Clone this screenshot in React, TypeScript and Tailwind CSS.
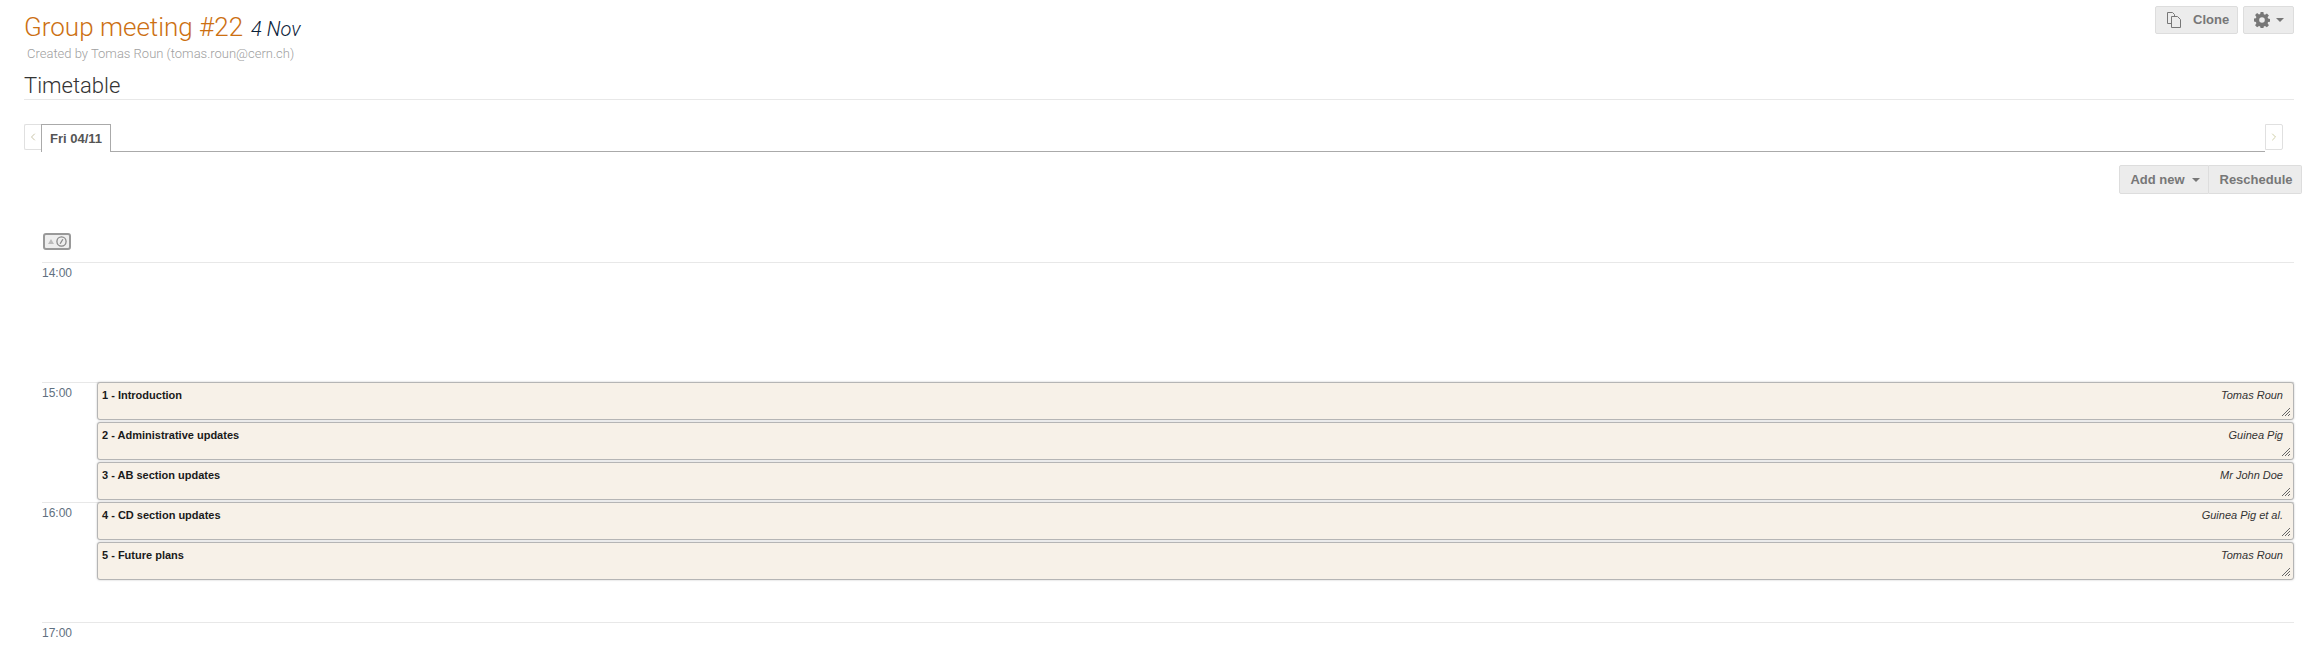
import { ChevronLeft, ChevronRight } from "lucide-react";

const hours = ["14:00", "15:00", "16:00", "17:00"];

const entries = [
  { title: "1 - Introduction", speaker: "Tomas Roun" },
  { title: "2 - Administrative updates", speaker: "Guinea Pig" },
  { title: "3 - AB section updates", speaker: "Mr John Doe" },
  { title: "4 - CD section updates", speaker: "Guinea Pig et al." },
  { title: "5 - Future plans", speaker: "Tomas Roun" },
];

function Caret() {
  return <span className="inline-block w-0 h-0 border-x-[4px] border-x-transparent border-t-[4px] border-t-[#777]" />;
}

function CloneIcon() {
  return (
    <svg width="16" height="16" viewBox="0 0 16 16" fill="none" stroke="#777" strokeWidth="1">
      <path d="M5.5 11.5h-4v-11h5l2 2v2" />
      <path d="M5.5 4.5h6l3 3v8h-9z" fill="#ececec" />
    </svg>
  );
}

function GearIcon() {
  return (
    <svg width="16" height="16" viewBox="0 0 16 16">
      <path
        fill="#777"
        fillRule="evenodd"
        d="M6.6 0h2.8l.4 2.2 1.2.5 1.9-1.3 2 2-1.3 1.9.5 1.2 1.9.4v2.8l-1.9.4-.5 1.2 1.3 1.9-2 2-1.9-1.3-1.2.5-.4 1.9H6.6l-.4-1.9-1.2-.5-1.9 1.3-2-2 1.3-1.9-.5-1.2L0 9.4V6.6l1.9-.4.5-1.2L1.1 3.1l2-2L5 2.4l1.2-.5zM8 5.2a2.8 2.8 0 1 0 0 5.6 2.8 2.8 0 0 0 0-5.6z"
      />
    </svg>
  );
}

function ResizeGrip() {
  return (
    <svg className="absolute right-[3px] bottom-[3px]" width="8" height="8" viewBox="0 0 8 8" stroke="#666" strokeWidth="1">
      <path d="M0 8 8 0M3 8l5-5M6 8l2-2" />
    </svg>
  );
}

export default function App() {
  return (
    <div className="h-[669px] w-[2307px] overflow-hidden bg-white font-['Liberation_Sans',sans-serif]">
      <div className="flex justify-between pl-6 pr-[13px] pt-1.5">
        <div className="pt-[3px]">
          <h1 className="flex items-baseline gap-2 font-['Roboto',sans-serif] font-light text-[26px] leading-[36px] text-[#cc7012]">
            Group meeting #22
            <span className="italic text-[20px] text-[#0b2239]">4 Nov</span>
          </h1>
          <div className="pl-[3px] font-['Roboto',sans-serif] font-light text-[13px] leading-[13px] text-[#a0a0a0]">
            Created by Tomas Roun (tomas.roun@cern.ch)
          </div>
        </div>
        <div className="flex gap-[5px]">
          <button className="flex h-[28px] w-[83px] items-center gap-[11px] rounded-[2px] border border-[#ddd] bg-[#ececec] pl-2.5 text-[13px] font-bold text-[#777]">
            <CloneIcon />
            Clone
          </button>
          <button className="flex h-[28px] w-[51px] items-center justify-center gap-[6px] rounded-[2px] border border-[#ddd] bg-[#ececec]">
            <GearIcon />
            <Caret />
          </button>
        </div>
      </div>

      <div className="mx-6 mr-[13px] mt-[13px] border-b border-[#e8e8e8]">
        <h2 className="font-['Roboto',sans-serif] font-light text-[22px] leading-[26px] text-[#333]">Timetable</h2>
      </div>

      <div className="ml-6 mr-[24px] mt-6 flex h-[28px] items-start">
        <div className="flex h-[26px] w-[17px] items-center justify-center rounded-l-[2px] border border-r-0 border-[#e0e0e0]">
          <ChevronLeft size={12} className="text-[#c9c4a8]" />
        </div>
        <div className="flex h-[28px] w-[70px] items-center justify-center border border-b-0 border-[#aaa] text-[13px] font-bold text-[#555]">
          Fri 04/11
        </div>
        <div className="h-[28px] flex-1 border-b border-[#aaa]" />
        <div className="flex h-[26px] w-[18px] items-center justify-center rounded-r-[2px] border border-[#e0e0e0]">
          <ChevronRight size={12} className="text-[#d0cfa8]" />
        </div>
      </div>

      <div className="mr-[5px] mt-[13px] flex justify-end">
        <button className="flex h-[29px] w-[90px] items-center justify-center gap-[7px] rounded-l-[2px] border border-[#ddd] bg-[#ececec] pl-[2px] text-[13px] font-bold text-[#777]">
          Add new
          <Caret />
        </button>
        <button className="h-[29px] w-[93px] rounded-r-[2px] border border-l-0 border-[#ddd] bg-[#ececec] pl-[2px] text-[13px] font-bold text-[#777]">
          Reschedule
        </button>
      </div>

      <div className="ml-[43px] mt-[39px] flex h-[17px] w-[28px] items-center justify-center gap-[2px] rounded-[3px] border-2 border-[#999] bg-[#eee]">
        <span className="h-0 w-0 border-x-[3px] border-b-[5px] border-x-transparent border-b-[#bbb]" />
        <svg width="11" height="11" viewBox="0 0 12 12" fill="none" stroke="#888" strokeWidth="1.4">
          <circle cx="6" cy="6" r="5" />
          <path d="M4.5 8.5l3-5" />
        </svg>
      </div>

      <div className="relative ml-[42px] mr-[13px] mt-[12px]">
        {hours.map((hour) => (
          <div key={hour} className="h-[120px] border-t border-[#e8e8e8] pt-[3px] text-[12px] leading-[14px] text-[#5f7080]">
            {hour}
          </div>
        ))}
        <div className="absolute left-[55px] right-0 top-[120px] flex flex-col gap-[2px]">
          {entries.map((entry) => (
            <div
              key={entry.title}
              className="relative flex h-[38px] items-start justify-between rounded-[3px] border border-[#b5b5b5] bg-[#f7f1e8] pl-[4px] pr-[10px] pt-[5px] text-[11px] leading-[14px] shadow-[0_0_2px_rgba(0,0,0,0.25)]"
            >
              <span className="font-bold text-[#1a1a1a]">{entry.title}</span>
              <span className="italic text-[#333]">{entry.speaker}</span>
              <ResizeGrip />
            </div>
          ))}
        </div>
      </div>
    </div>
  );
}
